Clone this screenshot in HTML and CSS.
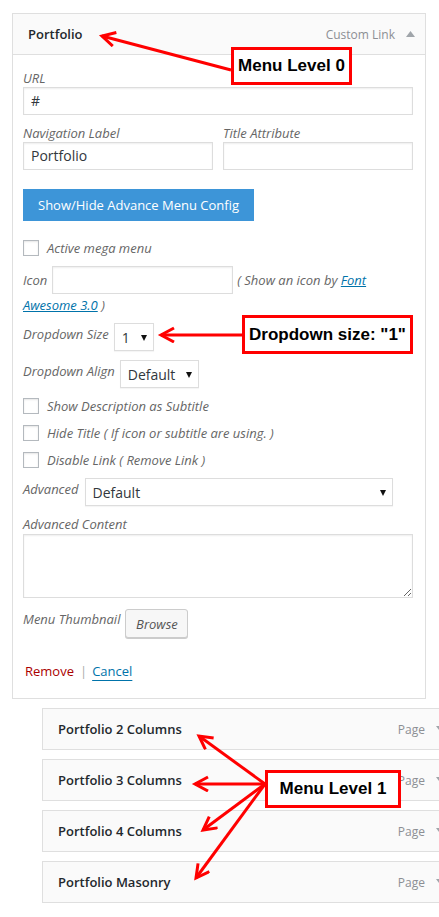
FILE: index.html
```html
<!DOCTYPE html>
<html lang="en">
<head>
    <meta charset="UTF-8">
    <meta name="viewport" content="width=device-width, initial-scale=1.0">
    <title>Menu item settings</title>
    <link rel="stylesheet" href="styles.css">
</head>
<body>

    <div class="panel">
        <div class="panel-head">
            <span class="item-title">Portfolio</span>
            <span class="item-type">Custom Link</span>
            <span class="toggle"><svg width="9" height="6" viewBox="0 0 9 6"><path d="M0 6 L4.5 0 L9 6 Z" fill="#a0a5aa"/></svg></span>
        </div>

        <div class="panel-body">
            <label class="field-label">URL</label>
            <div class="text-input">#</div>

            <div class="two-col">
                <div>
                    <label class="field-label">Navigation Label</label>
                    <div class="text-input">Portfolio</div>
                </div>
                <div>
                    <label class="field-label">Title Attribute</label>
                    <div class="text-input"></div>
                </div>
            </div>

            <button class="btn-blue">Show/Hide Advance Menu Config</button>

            <div class="check-row first"><span class="checkbox"></span>Active mega menu</div>

            <div class="icon-row">
                <span class="row-label">Icon</span>
                <span class="text-input small"></span>
                <span class="icon-hint">( Show an icon by <a href="#">Font</a></span>
            </div>
            <div class="icon-hint second"><a href="#">Awesome 3.0</a> )</div>

            <div class="select-row size-row">
                <span class="row-label">Dropdown Size</span>
                <div class="select w-size">1<span class="caret"></span></div>
            </div>

            <div class="select-row">
                <span class="row-label">Dropdown Align</span>
                <div class="select w-align">Default<span class="caret"></span></div>
            </div>

            <div class="check-row"><span class="checkbox"></span>Show Description as Subtitle</div>
            <div class="check-row"><span class="checkbox"></span>Hide Title ( If icon or subtitle are using. )</div>
            <div class="check-row"><span class="checkbox"></span>Disable Link ( Remove Link )</div>

            <div class="select-row">
                <span class="row-label">Advanced</span>
                <div class="select w-adv">Default<span class="caret"></span></div>
            </div>

            <label class="field-label content-label">Advanced Content</label>
            <textarea class="content-box"></textarea>

            <div class="select-row thumb-row">
                <span class="row-label">Menu Thumbnail</span>
                <button class="btn-browse">Browse</button>
            </div>

            <div class="actions">
                <a href="#" class="remove">Remove</a><span class="sep">|</span><a href="#" class="cancel">Cancel</a>
            </div>
        </div>
    </div>

    <div class="children">
        <div class="child"><span class="item-title">Portfolio 2 Columns</span><span class="item-type">Page</span><span class="toggle"><svg width="9" height="6" viewBox="0 0 9 6"><path d="M0 0 L4.5 6 L9 0 Z" fill="#a0a5aa"/></svg></span></div>
        <div class="child"><span class="item-title">Portfolio 3 Columns</span><span class="item-type">Page</span><span class="toggle"><svg width="9" height="6" viewBox="0 0 9 6"><path d="M0 0 L4.5 6 L9 0 Z" fill="#a0a5aa"/></svg></span></div>
        <div class="child"><span class="item-title">Portfolio 4 Columns</span><span class="item-type">Page</span><span class="toggle"><svg width="9" height="6" viewBox="0 0 9 6"><path d="M0 0 L4.5 6 L9 0 Z" fill="#a0a5aa"/></svg></span></div>
        <div class="child"><span class="item-title">Portfolio Masonry</span><span class="item-type">Page</span><span class="toggle"><svg width="9" height="6" viewBox="0 0 9 6"><path d="M0 0 L4.5 6 L9 0 Z" fill="#a0a5aa"/></svg></span></div>
    </div>

    <!-- annotations drawn over the screenshot -->
    <svg class="arrows" width="439" height="917" viewBox="0 0 439 917">
        <defs>
            <marker id="head" markerUnits="userSpaceOnUse" markerWidth="20" markerHeight="20" refX="14" refY="8" orient="auto">
                <path d="M1 1 L14 8 L1 15" fill="none" stroke="#f00" stroke-width="3"/>
            </marker>
        </defs>
        <g stroke="#f00" stroke-width="3" fill="none">
            <line x1="231" y1="70" x2="102" y2="36" marker-end="url(#head)"/>
            <line x1="242" y1="335" x2="161" y2="335" marker-end="url(#head)"/>
            <line x1="265" y1="784" x2="199" y2="736" marker-end="url(#head)"/>
            <line x1="265" y1="784" x2="195" y2="784" marker-end="url(#head)"/>
            <line x1="265" y1="784" x2="203" y2="830" marker-end="url(#head)"/>
            <line x1="265" y1="784" x2="196" y2="878" marker-end="url(#head)"/>
        </g>
    </svg>
    <div class="note note-l0">Menu Level 0</div>
    <div class="note note-size">Dropdown size: "1"</div>
    <div class="note note-l1">Menu Level 1</div>

</body>
</html>
```

FILE: styles.css
```css
*{
    box-sizing: border-box;
}
html, body{
    overflow-x: hidden;
}
body{
    margin: 0;
    position: relative;
    background: #fff;
    font-family: "Open Sans", "DejaVu Sans", sans-serif;
    font-size: 13px;
    color: #32373c;
}

/* top level menu item */
.panel{
    margin: 13px 0 0 12px;
    width: 414px;
    border: 1px solid #dfdfdf;
    background: #fff;
}
.panel-head{
    height: 41px;
    display: flex;
    align-items: center;
    padding-left: 15px;
    background: #fafafa;
    border-bottom: 1px solid #dfdfdf;
}
.item-title{
    font-weight: 600;
    color: #23282d;
    flex: 1;
}
.item-type{
    font-size: 12px;
    color: #8c8f94;
}
.toggle{
    width: 30px;
    display: flex;
    justify-content: center;
    align-items: center;
}
.panel-body{
    padding: 14px 12px 18px 10px;
}
.field-label{
    display: block;
    line-height: 18px;
    font-style: italic;
    color: #666;
}
.text-input{
    display: block;
    width: 100%;
    height: 28px;
    line-height: 26px;
    padding: 0 7px;
    font-size: 14px;
    color: #32373c;
    background: #fff;
    border: 1px solid #ddd;
    box-shadow: inset 0 1px 2px rgba(0,0,0,.07);
}
.two-col{
    margin-top: 9px;
    display: grid;
    grid-template-columns: 190px 190px;
    gap: 10px;
}
.btn-blue{
    margin-top: 19px;
    height: 32px;
    padding: 0 15px;
    border: none;
    background: #3d95d8;
    color: #fff;
    font-family: "Open Sans", sans-serif;
    font-size: 13px;
    cursor: pointer;
}
.check-row{
    margin-top: 9px;
    height: 18px;
    display: flex;
    align-items: center;
    font-style: italic;
    color: #666;
}
.check-row.first{
    margin-top: 18px;
}
.checkbox{
    width: 16px;
    height: 16px;
    margin-right: 8px;
    border: 1px solid #b4b9be;
    background: #fff;
    box-shadow: inset 0 1px 2px rgba(0,0,0,.1);
}
.icon-row{
    margin-top: 9px;
    display: flex;
    align-items: center;
    gap: 5px;
}
.icon-row .row-label{
    margin-top: 0;
}
.text-input.small{
    width: 181px;
}
.icon-hint{
    line-height: 18px;
    font-style: italic;
    color: #666;
    margin-left: -1px;
}
.icon-hint.second{
    margin: 0;
    padding-top: 2px;
}
.icon-hint a{
    color: #0073aa;
}
.select-row{
    margin-top: 9px;
    display: flex;
    align-items: flex-start;
    gap: 5px;
}
.row-label{
    margin-top: 2px;
    line-height: 18px;
    font-style: italic;
    color: #666;
}
.select{
    position: relative;
    height: 28px;
    line-height: 28px;
    padding-left: 7px;
    font-size: 14px;
    color: #32373c;
    background: #fff;
    border: 1px solid #ddd;
    box-shadow: 0 1px 1px rgba(0,0,0,.04);
}
.caret{
    position: absolute;
    right: 6px;
    top: 11px;
    width: 0;
    height: 0;
    border-left: 3.5px solid transparent;
    border-right: 3.5px solid transparent;
    border-top: 6px solid #111;
}
.w-size{ width: 40px; }
.w-align{ width: 79px; }
.w-adv{ width: 308px; margin-left: 1px; }
.content-label{
    margin-top: 9px;
}
.content-box{
    display: block;
    margin-top: 1px;
    width: 100%;
    height: 64px;
    border: 1px solid #ddd;
    box-shadow: inset 0 1px 2px rgba(0,0,0,.07);
    font-family: "Open Sans", sans-serif;
}
.thumb-row{
    margin-top: 11px;
}
.thumb-row .row-label{
    margin-top: 1px;
}
.btn-browse{
    width: 63px;
    height: 29px;
    padding: 0;
    border: 1px solid #ccc;
    border-radius: 3px;
    background: #f7f7f7;
    box-shadow: 0 1px 0 #ccc;
    font-family: "Open Sans", sans-serif;
    font-size: 13px;
    font-style: italic;
    color: #555;
}
.actions{
    margin-top: 24px;
    line-height: 18px;
}
.remove{
    color: #a00;
    text-decoration: none;
    padding-left: 2px;
}
.sep{
    color: #aaa;
    margin: 0 5px 0 6px;
}
.cancel{
    color: #0073aa;
    text-decoration: underline;
    text-underline-offset: 4px;
}

/* level 1 items */
.children{
    margin: 9px 0 0 42px;
}
.child{
    width: 414px;
    height: 42px;
    margin-bottom: 9px;
    display: flex;
    align-items: center;
    padding-left: 15px;
    background: #fafafa;
    border: 1px solid #dfdfdf;
}

/* red annotations */
.arrows{
    position: absolute;
    left: 0;
    top: 0;
    pointer-events: none;
}
.note{
    position: absolute;
    display: flex;
    align-items: center;
    justify-content: center;
    background: #fff;
    border: 3px solid #f00;
    font-family: "Liberation Sans", Arial, sans-serif;
    font-weight: bold;
    font-size: 17px;
    color: #000;
}
.note-l0{
    left: 231px;
    top: 47px;
    width: 121px;
    height: 38px;
}
.note-size{
    left: 242px;
    top: 315px;
    width: 171px;
    height: 39px;
}
.note-l1{
    left: 265px;
    top: 770px;
    width: 136px;
    height: 38px;
}
```
